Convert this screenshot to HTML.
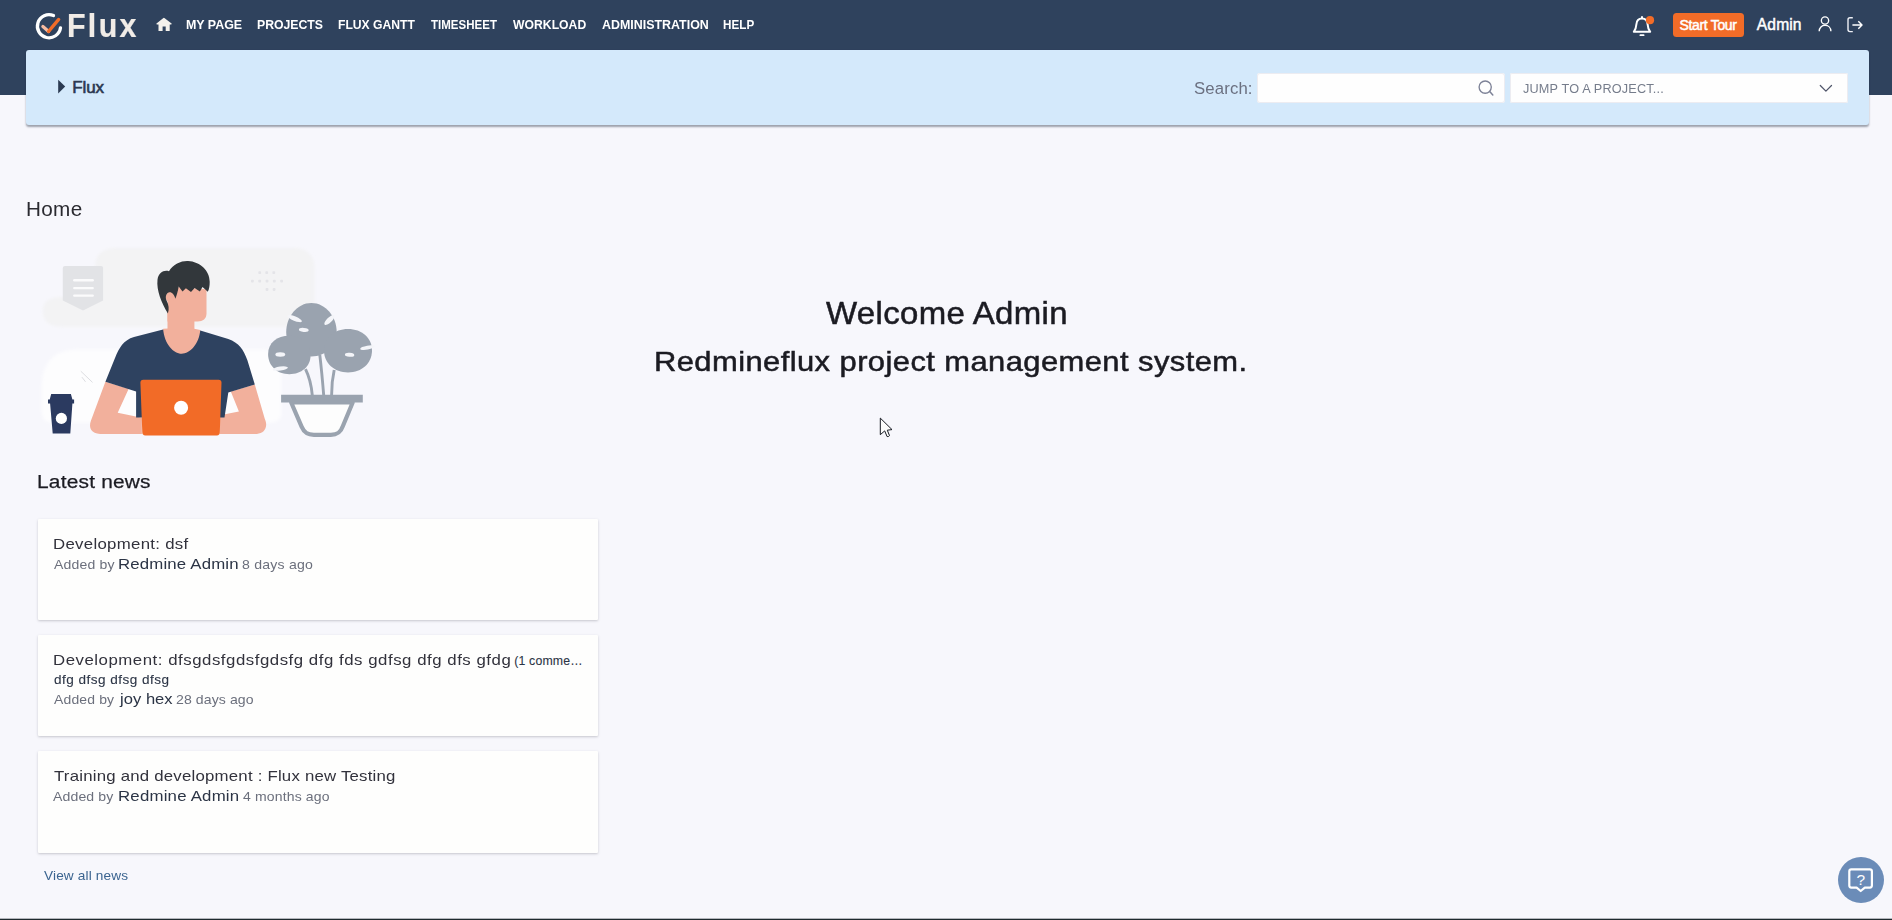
<!DOCTYPE html>
<html lang="en">
<head>
<meta charset="utf-8">
<title>Flux</title>
<style>
*{box-sizing:border-box;margin:0;padding:0}
html,body{width:1892px;height:920px;overflow:hidden}
body{background:#f7f7fc;font-family:"Liberation Sans",sans-serif;color:#222;position:relative}
a{text-decoration:none}
.t{position:absolute;white-space:nowrap;line-height:1;font-weight:normal;transform-origin:0 0}
.b{font-weight:bold}
svg{position:absolute;overflow:visible}
#top{position:absolute;left:0;top:0;width:1892px;height:95px;background:#2f425d}
#sub{position:absolute;left:26px;top:50px;width:1842.5px;height:75px;background:#d4e9fb;border-radius:3px;box-shadow:0 1.5px 2px rgba(30,40,60,.42)}
#tourbtn{position:absolute;left:1673px;top:13px;width:71px;height:24px;background:#f26c28;border-radius:3.5px}
#sinput{position:absolute;left:1257px;top:72.5px;width:248px;height:30.5px;background:#fefefe;border-radius:3px;box-shadow:inset 0 0 0 1px #ececf1}
#sel{position:absolute;left:1510px;top:72.5px;width:338px;height:30.5px;background:#fefefe;border-radius:2px;box-shadow:inset 0 0 0 1px #ececf1}
.card{position:absolute;left:37.5px;width:560.5px;height:101.5px;background:#fefefd;border-radius:1px;box-shadow:0 1px 2.5px rgba(70,70,85,.27)}
#help{position:absolute;left:1838px;top:857px;width:46px;height:46px;border-radius:50%;background:#6b8cb8}
#bottomline{position:absolute;left:0;top:918px;width:1892px;height:2px;background:linear-gradient(#b4b6bc 0,#b4b6bc 50%,#1f2a2e 50%,#1f2a2e 100%)}
</style>
</head>
<body>
<header id="top-menu">
<div id="top"></div>
<div id="sub"></div>
<div id="tourbtn"></div>
<div id="sinput"></div>
<div id="sel"></div>
<svg id="icons-top" style="left:0;top:0" width="1892" height="130" viewBox="0 0 1892 130" fill="none">
<!-- logo ring -->
<path d="M53.5 15.5 A11.6 11.6 0 1 0 60.5 27.8" stroke="#fff" stroke-width="3.3" stroke-linecap="round"/>
<path d="M42.9 26.6 L48.6 31.4" stroke="#f6bba2" stroke-width="3.3" stroke-linecap="round"/>
<path d="M48.6 31.4 L58.7 19.4" stroke="#f26c28" stroke-width="3.3" stroke-linecap="round"/>
<!-- home -->
<path d="M163.1 18.2 Q163.9 17.5 164.7 18.2 L171.6 23.6 Q172 24.3 171.2 24.4 H169.7 V30.9 H165.7 V26.4 H162.6 V30.9 H158.5 V24.4 H156.9 Q156 24.3 156.5 23.6 Z" fill="#f4f1ec"/>
<!-- bell -->
<path d="M1642 16.9 V18.4 M1642 18.4 C1638.2 18.4 1636.6 21.2 1636.4 24.2 C1636.2 27.6 1635.6 29.4 1633.8 31.8 H1650.2 C1648.4 29.4 1647.8 27.6 1647.6 24.2 C1647.4 21.2 1645.8 18.4 1642 18.4 Z" stroke="#fff" stroke-width="2" stroke-linejoin="round" stroke-linecap="round"/>
<path d="M1640.4 35.2 H1643.6" stroke="#fff" stroke-width="1.8" stroke-linecap="round"/>
<circle cx="1650" cy="20.2" r="4.1" fill="#f26c28"/>
<!-- user -->
<circle cx="1825" cy="20.5" r="3.65" stroke="#fff" stroke-width="1.35"/>
<path d="M1819.2 31.3 C1819.2 27.6 1821.8 25.3 1825 25.3 C1828.2 25.3 1830.9 27.6 1830.9 31.3" stroke="#fff" stroke-width="1.4"/>
<!-- logout -->
<path d="M1852.8 17.8 H1850 Q1848 17.8 1848 19.8 V29.6 Q1848 31.6 1850 31.6 H1852.8" stroke="#eef0f6" stroke-width="1.4"/>
<path d="M1852.4 25 H1861.6 M1858.3 21.3 L1862 25 L1858.3 28.7" stroke="#fff" stroke-width="1.45" stroke-linejoin="round"/>
<!-- triangle -->
<path d="M58.2 79.8 L65.2 86.6 L58.2 93.4 Z" fill="#2b3a52"/>
<!-- magnifier -->
<circle cx="1485.2" cy="87.1" r="6.1" stroke="#7d8297" stroke-width="1.35"/>
<path d="M1489.7 91.6 L1492.8 94.9" stroke="#7d8297" stroke-width="1.5" stroke-linecap="round"/>
<!-- chevron -->
<path d="M1820.3 85.5 L1825.9 91.1 L1831.5 85.5" stroke="#50566a" stroke-width="1.25" stroke-linecap="round" stroke-linejoin="round"/>
</svg>

<a href="#" class="t b" id="logo" style="left:66.74px;top:10px;font-size:32.3px;letter-spacing:2.473px;transform:scaleX(0.94);color:#f1ece7;-webkit-text-stroke:0.2px #f1ece7;">Flux</a>
<nav>
<a href="#" class="t b" id="n1" style="left:186.01px;top:19px;font-size:12.7px;letter-spacing:-0.014px;transform:scaleX(0.98);color:#fff;">MY PAGE</a>
<a href="#" class="t b" id="n2" style="left:256.71px;top:19px;font-size:12.7px;letter-spacing:-0.021px;transform:scaleX(0.967);color:#fff;">PROJECTS</a>
<a href="#" class="t b" id="n3" style="left:337.63px;top:19px;font-size:12.7px;letter-spacing:-0.012px;transform:scaleX(0.959);color:#fff;">FLUX GANTT</a>
<a href="#" class="t b" id="n4" style="left:430.60px;top:19px;font-size:12.7px;letter-spacing:0.024px;transform:scaleX(0.906);color:#fff;">TIMESHEET</a>
<a href="#" class="t b" id="n5" style="left:513.00px;top:19px;font-size:12.7px;letter-spacing:0.014px;transform:scaleX(0.961);color:#fff;">WORKLOAD</a>
<a href="#" class="t b" id="n6" style="left:601.80px;top:19px;font-size:12.7px;letter-spacing:-0.001px;transform:scaleX(0.98);color:#fff;">ADMINISTRATION</a>
<a href="#" class="t b" id="n7" style="left:723.04px;top:19px;font-size:12.7px;letter-spacing:0.089px;transform:scaleX(0.918);color:#fff;">HELP</a>
</nav>
<div id="account">
<a href="#" class="t" id="tour" style="left:1679.40px;top:18px;font-size:14px;letter-spacing:-0.314px;transform:scaleX(1.0);color:#fff;-webkit-text-stroke:0.5px #fff;">Start Tour</a>
<a href="#" class="t" id="admin" style="left:1756.85px;top:17px;font-size:15.6px;letter-spacing:0.114px;transform:scaleX(1.0);color:#fff;-webkit-text-stroke:0.45px #fff;">Admin</a>
</div>
<div id="quick-search">
<h1 class="t" id="flux2" style="left:72.27px;top:79px;font-size:17px;letter-spacing:-0.134px;transform:scaleX(1.0);color:#2b3850;-webkit-text-stroke:0.6px #2b3850;">Flux</h1>
<label class="t" id="search" style="left:1193.83px;top:80px;font-size:16.3px;letter-spacing:0.122px;transform:scaleX(1.029);color:#6b7080;">Search:</label>
<span class="t" id="jump" style="left:1522.50px;top:83px;font-size:12.5px;letter-spacing:0.169px;transform:scaleX(1.015);color:#757c8b;">JUMP TO A PROJECT...</span>
</div>
</header>
<main id="content">
<h2 class="t" id="home" style="left:25.99px;top:200px;font-size:19.6px;letter-spacing:0.291px;transform:scaleX(1.057);color:#2a2a30;">Home</h2>
<svg id="illus" style="left:0;top:230px" width="420" height="230" viewBox="0 230 420 230">
<defs><filter id="bl" x="-10%" y="-10%" width="120%" height="120%"><feGaussianBlur stdDeviation="1.6"/></filter></defs><g filter="url(#bl)">
<path d="M 95.3 265.1 C 95.3 253.7 104.5 248.0 115.9 248.0 L 293.9 248.0 C 307.6 248.0 314.5 256.0 314.5 267.4 L 314.5 308.5 C 314.5 319.9 307.6 326.7 296.2 326.7 L 61.1 326.7 C 47.4 326.7 42.8 319.9 42.8 310.8 C 42.8 301.6 49.7 297.1 61.1 297.1 L 95.3 297.1 Z" fill="#f3f3f4"/>
<path d="M 41.7 386.1 C 41.7 363.3 54.2 349.6 77.1 349.6 L 262.0 349.6 C 275.6 349.6 281.4 358.7 281.4 372.4 L 281.4 413.5 C 281.4 420.3 275.6 422.6 268.8 422.6 L 52.0 422.6 C 45.1 422.6 41.7 418.0 41.7 411.2 Z" fill="#fdfdfe"/>
</g>
<path d="M 291.6 399.8 L 353.3 399.8 L 339.6 434.0 L 305.3 434.0 Z" fill="#fdfdfd"/>
<rect x="258.3" y="271.2" width="2.8" height="2.8" rx="0.8" fill="#e4e4e8"/>
<rect x="265.3" y="271.2" width="2.8" height="2.8" rx="0.8" fill="#e4e4e8"/>
<rect x="272.4" y="271.2" width="2.8" height="2.8" rx="0.8" fill="#e4e4e8"/>
<rect x="251.0" y="279.7" width="2.8" height="2.8" rx="0.8" fill="#e4e4e8"/>
<rect x="258.3" y="279.7" width="2.8" height="2.8" rx="0.8" fill="#e4e4e8"/>
<rect x="265.6" y="279.7" width="2.8" height="2.8" rx="0.8" fill="#e4e4e8"/>
<rect x="272.9" y="279.7" width="2.8" height="2.8" rx="0.8" fill="#e4e4e8"/>
<rect x="280.2" y="279.7" width="2.8" height="2.8" rx="0.8" fill="#e4e4e8"/>
<rect x="265.6" y="288.1" width="2.8" height="2.8" rx="0.8" fill="#e4e4e8"/>
<rect x="272.7" y="288.1" width="2.8" height="2.8" rx="0.8" fill="#e4e4e8"/>
<path d="M 80.8 371.2 L 92.5 382.4 M 81.9 377.1 L 85.5 381.8" stroke="#dddee2" stroke-width="1" fill="none"/>
<path d="M 65.0 265.9 L 101.0 265.9 Q 103.1 265.9 103.1 268.0 L 103.1 300.4 L 83.0 310.4 L 62.8 300.4 L 62.8 268.0 Q 62.8 265.9 65.0 265.9 Z" fill="#e2e3e6"/>
<path d="M 74.3 280.3 L 92.7 280.3" stroke="#fbfbfc" stroke-width="2.4" stroke-linecap="round" fill="none"/>
<path d="M 74.3 288.1 L 92.7 288.1" stroke="#fbfbfc" stroke-width="2.4" stroke-linecap="round" fill="none"/>
<path d="M 74.3 295.6 L 92.7 295.6" stroke="#fbfbfc" stroke-width="2.4" stroke-linecap="round" fill="none"/>
<path d="M 51.2 394.1 L 70.9 394.1 L 72.4 399.4 L 74.1 399.4 L 74.1 403.6 L 72.4 403.6 L 70.3 433.5 L 52.7 433.5 L 50.1 403.6 L 48.0 403.6 L 48.0 399.4 L 49.7 399.4 Z" fill="#2b3a60"/>
<circle cx="61.4" cy="418.4" r="5.6" fill="#fff"/>
<path d="M 105.4 381.8 L 128.7 388.8 L 117.7 412.7 L 141.9 417.8 L 141.9 433.9 L 100.1 433.9 C 91.7 433.9 88.1 428.0 91.0 420.6 Z" fill="#f2b09c"/>
<path d="M 254.8 384.5 L 230.8 391.5 L 238.9 411.4 L 219.8 415.3 L 219.8 433.9 L 256.9 433.9 C 264.3 433.9 268.6 426.9 264.7 418.4 Z" fill="#f2b09c"/>
<path d="M 163.1 329.4 L 134.0 336.9 C 123.4 340.0 119.2 347.5 115.0 358.1 L 105.4 381.8 L 136.1 391.5 L 136.1 417.4 L 224.5 417.4 L 228.3 392.4 L 254.8 384.5 L 247.4 360.2 C 243.6 349.6 238.9 342.8 228.3 339.0 L 200.3 330.5 Z" fill="#2e4260"/>
<path d="M 163.1 328.8 C 164.3 344.3 173.6 353.8 181.7 353.8 C 189.7 353.8 199.1 344.3 200.3 330.1 L 194.4 328.8 L 194.4 319.9 L 167.5 309.3 L 167.5 328.4 Z" fill="#f2b09c"/>
<path d="M 167.5 292.4 L 177.5 287.1 L 206.5 289.2 L 206.5 313.6 C 206.5 318.9 202.9 321.6 197.6 321.6 L 167.5 321.6 Z" fill="#f2b09c"/>
<circle cx="170.0" cy="297.0" r="4.6" fill="#f2b09c"/>
<path d="M 167.9 313.6 C 161.6 303.0 156.3 290.3 157.5 279.7 C 158.4 272.2 164.3 269.5 169.0 271.2 C 173.2 263.8 181.7 260.6 188.1 261.0 C 199.7 261.7 209.7 270.1 209.7 281.8 C 209.7 286.0 209.2 289.2 207.8 291.7 L 202.5 287.1 L 199.9 291.5 L 194.6 288.1 L 191.0 291.9 L 185.9 288.3 L 182.5 291.5 L 178.7 286.4 C 177.9 291.3 176.6 295.6 175.3 298.7 C 174.3 293.9 171.1 291.3 168.6 292.4 C 165.6 293.6 165.2 297.9 166.9 301.3 C 168.6 304.7 169.4 308.9 167.9 313.6 Z" fill="#32373b"/>
<path d="M 143.3 379.7 L 218.6 379.7 Q 221.5 379.7 221.5 382.6 L 219.8 432.6 Q 219.8 435.4 216.9 435.4 L 145.3 435.4 Q 142.3 435.4 142.3 432.6 L 140.4 382.6 Q 140.4 379.7 143.3 379.7 Z" fill="#f26b27"/>
<circle cx="181.1" cy="407.8" r="7" fill="#fff"/>
<path d="M 305.5 369.2 C 309.7 377.6 311.4 386.0 312.3 395.3 M 319.8 354.8 C 321.5 369.2 322.7 382.6 323.7 395.3 M 334.2 370.0 C 332.5 377.6 331.6 386.0 331.6 395.3" stroke="#9aa3af" stroke-width="2.9" fill="none"/>
<path d="M 311.4 303.1 C 325.7 303.1 336.7 316.9 336.7 332.1 C 336.7 346.4 325.7 356.5 311.4 356.5 C 297.1 356.5 286.2 346.4 286.2 332.1 C 286.2 316.9 297.1 303.1 311.4 303.1 Z" fill="#9aa3af"/>
<path d="M 289.4 335.8 C 302.2 335.8 310.6 343.9 310.6 355.3 C 310.6 366.6 301.3 374.2 289.4 374.2 C 276.9 374.2 268.1 365.8 268.1 354.0 C 268.1 343.0 276.9 335.8 289.4 335.8 Z" fill="#9aa3af"/>
<path d="M 348.0 329.1 C 361.9 329.1 372.0 338.0 372.0 350.6 C 372.0 363.3 361.9 372.5 348.0 372.5 C 334.2 372.5 324.0 363.3 324.0 350.6 C 324.0 338.0 334.2 329.1 348.0 329.1 Z" fill="#9aa3af"/>
<ellipse cx="303.8" cy="329.9" rx="4.9" ry="2.0" transform="rotate(5 303.8 329.9)" fill="#f4f5f9"/>
<ellipse cx="294.7" cy="318.6" rx="7.7" ry="2.2" transform="rotate(22 294.7 318.6)" fill="#f4f5f9"/>
<ellipse cx="329.4" cy="320.0" rx="6.7" ry="2.5" transform="rotate(-45 329.4 320.0)" fill="#f4f5f9"/>
<ellipse cx="280.3" cy="354.5" rx="4.9" ry="2.2" transform="rotate(0 280.3 354.5)" fill="#f4f5f9"/>
<ellipse cx="280.3" cy="368.6" rx="7.7" ry="2.0" transform="rotate(-8 280.3 368.6)" fill="#f4f5f9"/>
<ellipse cx="349.6" cy="354.8" rx="4.7" ry="2.0" transform="rotate(5 349.6 354.8)" fill="#f4f5f9"/>
<ellipse cx="367.5" cy="347.6" rx="7.4" ry="2.0" transform="rotate(-10 367.5 347.6)" fill="#f4f5f9"/>
<path d="M 291.2 402.5 L 301.6 426.7 C 304.2 432.8 307.5 434.8 313.9 434.8 L 330.8 434.8 C 337.2 434.8 340.6 432.8 342.6 426.7 L 352.7 402.5 Z" fill="#fdfdfd" stroke="#9aa3af" stroke-width="4.2" stroke-linejoin="round"/>
<path d="M 281.1 394.7 L 362.8 394.7 L 362.8 402.5 L 281.1 402.5 Z" fill="#9aa3af"/>
</svg>
<h2 class="t" id="w1" style="left:826.02px;top:298px;font-size:31.2px;letter-spacing:0.311px;transform:scaleX(1.057);color:#1b1b22;-webkit-text-stroke:0.5px #1b1b22;">Welcome Admin</h2>
<h3 class="t" id="w2" style="left:653.54px;top:348px;font-size:27.6px;letter-spacing:0.384px;transform:scaleX(1.12);color:#1b1b22;-webkit-text-stroke:0.5px #1b1b22;">Redmineflux project management system.</h3>
<section class="news">
<h3 class="t" id="ln" style="left:36.80px;top:472px;font-size:19.2px;letter-spacing:0.187px;transform:scaleX(1.089);color:#1b1b22;-webkit-text-stroke:0.25px #1b1b22;">Latest news</h3>
<article class="card" style="top:518.5px">
<a href="#" class="t" id="c1t" style="left:15.01px;top:17.5px;font-size:15px;letter-spacing:0.265px;transform:scaleX(1.12);color:#32323c;">Development: dsf</a>
<span class="t" id="c1a" style="left:16.00px;top:40.5px;font-size:12.6px;letter-spacing:0.162px;transform:scaleX(1.114);color:#6b6f7c;">Added by</span>
<a href="#" class="t" id="c1b" style="left:80.41px;top:37.5px;font-size:15px;letter-spacing:0.144px;transform:scaleX(1.12);color:#2b3445;">Redmine Admin</a>
<span class="t" id="c1c" style="left:204.24px;top:40.5px;font-size:12.6px;letter-spacing:0.191px;transform:scaleX(1.12);color:#6b6f7c;">8 days ago</span>
</article>
<article class="card" style="top:634.8px">
<a href="#" class="t" id="c2t" style="left:15.51px;top:17.2px;font-size:15px;letter-spacing:0.472px;transform:scaleX(1.12);color:#32323c;">Development: dfsgdsfgdsfgdsfg dfg fds gdfsg dfg dfs gfdg</a>
<span class="t" id="c2cm" style="left:476.76px;top:20.2px;font-size:12.3px;letter-spacing:0.171px;transform:scaleX(1.0);color:#2b3445;-webkit-text-stroke:0.1px #2b3445;">(1 comme…</span>
<p class="t" id="c2d" style="left:16.00px;top:39.2px;font-size:12.1px;letter-spacing:0.427px;transform:scaleX(1.12);color:#2b3445;-webkit-text-stroke:0.1px #2b3445;">dfg dfsg dfsg dfsg</p>
<span class="t" id="c2a" style="left:16.00px;top:59.2px;font-size:12.6px;letter-spacing:0.141px;transform:scaleX(1.108);color:#6b6f7c;">Added by</span>
<a href="#" class="t" id="c2b" style="left:82.00px;top:56.2px;font-size:15px;letter-spacing:0.026px;transform:scaleX(1.104);color:#2b3445;">joy hex</a>
<span class="t" id="c2c" style="left:138.87px;top:59.2px;font-size:12.6px;letter-spacing:0.079px;transform:scaleX(1.118);color:#6b6f7c;">28 days ago</span>
</article>
<article class="card" style="top:751px">
<a href="#" class="t" id="c3t" style="left:16.40px;top:17px;font-size:15px;letter-spacing:0.191px;transform:scaleX(1.12);color:#32323c;">Training and development : Flux new Testing</a>
<span class="t" id="c3a" style="left:15.80px;top:40px;font-size:12.6px;letter-spacing:0.098px;transform:scaleX(1.119);color:#6b6f7c;">Added by</span>
<a href="#" class="t" id="c3b" style="left:80.11px;top:37px;font-size:15px;letter-spacing:0.191px;transform:scaleX(1.12);color:#2b3445;">Redmine Admin</a>
<span class="t" id="c3c" style="left:205.10px;top:40px;font-size:12.6px;letter-spacing:0.129px;transform:scaleX(1.113);color:#6b6f7c;">4 months ago</span>
</article>
<a href="#" class="t" id="van" style="left:44.10px;top:869px;font-size:13px;letter-spacing:0.136px;transform:scaleX(1.048);color:#3b6490;">View all news</a>
</section>
</main>
<!-- mouse cursor -->
<svg id="cursor" style="left:879px;top:417px" width="14" height="22" viewBox="0 0 14 22">
<path d="M1.3 1.1 V17.7 L5.7 13.9 L8.1 19.6 Q9.6 19.9 10.5 18.6 L8.3 13.2 L13 12.6 Z" fill="#fdfdfd" stroke="#171a22" stroke-width="1" stroke-linejoin="round"/>
</svg>

<div id="help"></div>
<svg id="helpicon" style="left:1838px;top:857px" width="46" height="46" viewBox="1838 857 46 46" fill="none">
<path d="M1856.6 887.6 H1851.3 Q1849.3 887.6 1849.3 885.6 V871.4 Q1849.3 869.4 1851.3 869.4 H1869.9 Q1871.9 869.4 1871.9 871.4 V885.6 Q1871.9 887.6 1869.9 887.6 H1864.8 L1860.7 891 Z" stroke="#fff" stroke-width="2.2" stroke-linejoin="round"/>
<text x="1860.8" y="884.6" text-anchor="middle" font-family="Liberation Sans, sans-serif" font-size="15.5" fill="#fff">?</text>
</svg>

<div id="bottomline"></div>
</body>
</html>
